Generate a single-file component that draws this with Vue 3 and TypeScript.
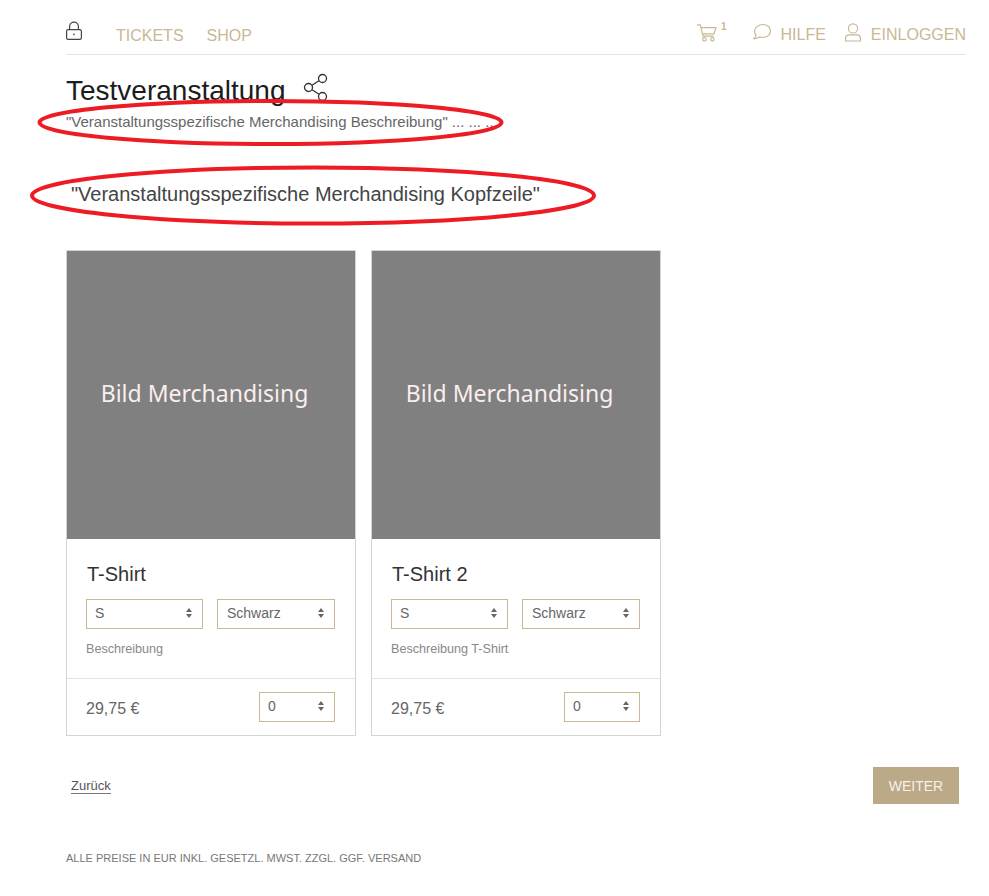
<script setup lang="ts">
interface Product {
  name: string;
  description: string;
  price: string;
}

const products: Product[] = [
  { name: 'T-Shirt', description: 'Beschreibung', price: '29,75 €' },
  { name: 'T-Shirt 2', description: 'Beschreibung T-Shirt', price: '29,75 €' },
];
</script>

<template>
  <div class="page">
    <header class="topbar">
      <nav class="nav-left">
        <svg class="lock" width="18" height="20" viewBox="0 0 18 20" fill="none" stroke="#444" stroke-width="1.2">
          <rect x="1.6" y="8.6" width="14.8" height="9.8" rx="1.6" />
          <path d="M4.6 8.6V5.6a4.4 4.4 0 0 1 8.8 0v3" />
          <circle cx="9" cy="13.4" r="0.8" fill="#444" stroke="none" />
        </svg>
        <a class="nav-link">TICKETS</a>
        <a class="nav-link">SHOP</a>
      </nav>
      <nav class="nav-right">
        <span class="cart">
          <svg width="22" height="20" viewBox="0 0 24 22" fill="none" stroke="#c8b894" stroke-width="1.3">
            <path d="M1 2h3.6l3 12.4h11.6" />
            <path d="M5.2 5h16.6l-2 7H7" />
            <circle cx="9.2" cy="18" r="1.9" />
            <circle cx="18" cy="18" r="1.9" />
          </svg>
          <sup class="cart-count">1</sup>
        </span>
        <a class="nav-link with-icon">
          <svg width="20" height="18" viewBox="0 0 20 18" fill="none" stroke="#c8b894" stroke-width="1.2">
            <path d="M11 1.500c4.200 0 7.500 2.800 7.500 6.500s-3.300 6.500-7.500 6.500c-1.200 0-2.300-.2-3.300-.6-1.500 1.100-3.400 1.700-5.700 1.800 1-.9 1.700-2.100 2-3.500C2.900 11 2.500 9.500 2.500 8c0-3.700 4.300-6.500 8.500-6.500z" />
          </svg>
          HILFE
        </a>
        <a class="nav-link with-icon">
          <svg width="18" height="19" viewBox="0 0 18 19" fill="none" stroke="#c8b894" stroke-width="1.2">
            <circle cx="9" cy="5.400" r="4.600" />
            <path d="M1.600 18v-2.600c0-2.200 1.700-3.600 3.800-3.600h7.200c2.100 0 3.800 1.400 3.800 3.600V18z" />
          </svg>
          EINLOGGEN
        </a>
      </nav>
    </header>

    <div class="title-row">
      <h1>Testveranstaltung</h1>
      <svg class="share" width="26" height="28" viewBox="0 0 26 28" fill="none" stroke="#333" stroke-width="1.300">
        <circle cx="19.500" cy="5.500" r="4" />
        <circle cx="5.500" cy="14.500" r="4" />
        <circle cx="19.500" cy="23.500" r="4" />
        <path d="M9 12.300l7-4.500M9 16.700l7 4.500" />
      </svg>
    </div>
    <p class="description">"Veranstaltungsspezifische Merchandising Beschreibung" ... ... ...</p>
    <h2 class="headline">"Veranstaltungsspezifische Merchandising Kopfzeile"</h2>

    <section class="cards">
      <article v-for="product in products" :key="product.name" class="card">
        <div class="card-image">Bild Merchandising</div>
        <div class="card-body">
          <h3>{{ product.name }}</h3>
          <div class="selects">
            <div class="select size"><span>S</span><i class="arrows"></i></div>
            <div class="select color"><span>Schwarz</span><i class="arrows"></i></div>
          </div>
          <p class="card-desc">{{ product.description }}</p>
        </div>
        <div class="card-foot">
          <span class="price">{{ product.price }}</span>
          <div class="select qty"><span>0</span><i class="arrows"></i></div>
        </div>
      </article>
    </section>

    <div class="actions">
      <a class="back">Zurück</a>
      <button class="next" type="button">WEITER</button>
    </div>

    <p class="legal">ALLE PREISE IN EUR INKL. GESETZL. MWST. ZZGL. GGF. VERSAND</p>

    <!-- rote Markierungen liegen über dem Inhalt -->
    <svg class="marks" width="989" height="260" viewBox="0 0 989 260" fill="none" stroke="#ed1c24" stroke-width="4">
      <ellipse cx="270.500" cy="122.500" rx="231" ry="21.500" />
      <ellipse cx="313" cy="195.500" rx="281" ry="28" />
    </svg>
  </div>
</template>

<style scoped>
.page {
  position: relative;
  width: 989px;
  height: 896px;
  box-sizing: border-box;
  padding: 0 23px 0 66px;
  font-family: "Liberation Sans", Arial, sans-serif;
  color: #444;
  overflow: hidden;
}

.topbar {
  height: 55px;
  box-sizing: border-box;
  border-bottom: 1px solid #e2e2e2;
  display: flex;
  justify-content: space-between;
  align-items: flex-start;
}

.nav-left,
.nav-right {
  display: flex;
  align-items: center;
  height: 39px;
  margin-top: 15px;
}

.nav-left {
  margin-top: 16px;
}

.lock {
  margin: -10px 33px 0 -1px;
}

.nav-link {
  color: #c8b894;
  font-size: 16px;
  line-height: 39px;
}

.nav-left .nav-link + .nav-link {
  margin-left: 23px;
}

.nav-right .nav-link {
  margin-left: 18px;
}

.with-icon {
  display: flex;
  align-items: center;
  gap: 9px;
}

.with-icon svg {
  margin-top: -5px;
}

.cart {
  display: flex;
  align-items: center;
  margin: -4px 7px 0 0;
}

.cart-count {
  font-size: 10px;
  font-weight: 700;
  color: #c8b894;
  margin: -12px 0 0 3px;
  line-height: 1;
}

.title-row {
  display: flex;
  align-items: center;
  gap: 18px;
  height: 36px;
  margin-top: 18px;
}

.share {
  margin-top: -9px;
}

h1 {
  margin: 0;
  font-size: 28px;
  font-weight: 400;
  color: #1c1c1c;
  line-height: 36px;
}

.description {
  margin: 4px 0 0;
  font-size: 15px;
  line-height: 18px;
  color: #666;
}

.headline {
  margin: 51px 0 0 5px;
  font-size: 20px;
  font-weight: 400;
  line-height: 24px;
  color: #444;
}

.cards {
  display: flex;
  gap: 15px;
  margin-top: 44px;
}

.card {
  width: 290px;
  height: 486px;
  box-sizing: border-box;
  border: 1px solid #d4d4d4;
  display: flex;
  flex-direction: column;
}

.card-image {
  height: 288px;
  background: #808080;
  color: #fbeeee;
  font-family: "Noto Sans", sans-serif;
  font-size: 23px;
  display: flex;
  align-items: center;
  justify-content: center;
  padding: 0 13px 4px 0;
  box-sizing: border-box;
  flex-shrink: 0;
}

.card-body {
  height: 140px;
  box-sizing: border-box;
  border-bottom: 1px solid #e2e2e2;
  padding: 22px 20px 0 19px;
}

h3 {
  margin: 0;
  padding-left: 1px;
  font-size: 20px;
  font-weight: 400;
  line-height: 26px;
  color: #333;
}

.selects {
  display: flex;
  gap: 14px;
  margin-top: 12px;
}

.select {
  position: relative;
  height: 30px;
  box-sizing: border-box;
  border: 1px solid #c8b894;
  font-size: 14px;
  line-height: 26px;
  color: #666;
  padding-left: 8px;
}

.size {
  width: 117px;
}

.color {
  width: 118px;
  padding-left: 9px;
}

.qty {
  width: 76px;
}

.arrows {
  position: absolute;
  right: 10px;
  top: 8px;
  width: 0;
  height: 0;
  border-left: 3.500px solid transparent;
  border-right: 3.500px solid transparent;
  border-bottom: 4.500px solid #666;
}

.arrows::after {
  content: "";
  position: absolute;
  left: -3.500px;
  top: 6px;
  width: 0;
  height: 0;
  border-left: 3.500px solid transparent;
  border-right: 3.500px solid transparent;
  border-top: 4.500px solid #666;
}

.card-desc {
  margin: 12px 0 0;
  font-size: 12.600px;
  line-height: 16px;
  color: #888;
}

.card-foot {
  flex: 1;
  display: flex;
  align-items: center;
  justify-content: space-between;
  padding: 0 20px 0 19px;
}

.price {
  font-size: 16px;
  color: #666;
  margin-top: 4px;
}

.actions {
  display: flex;
  justify-content: space-between;
  align-items: center;
  margin-top: 31px;
  padding: 0 7px 0 5px;
}

.back {
  font-size: 13px;
  line-height: 15px;
  color: #555;
  border-bottom: 1px solid #777;
}

.next {
  width: 86px;
  height: 37px;
  border: 0;
  background: #bba987;
  color: #f5f1ea;
  font-family: inherit;
  font-size: 14px;
  padding: 0;
}

.legal {
  margin: 47px 0 0;
  font-size: 11px;
  line-height: 14px;
  color: #777;
}

.marks {
  position: absolute;
  left: 0;
  top: 0;
  pointer-events: none;
}
</style>
